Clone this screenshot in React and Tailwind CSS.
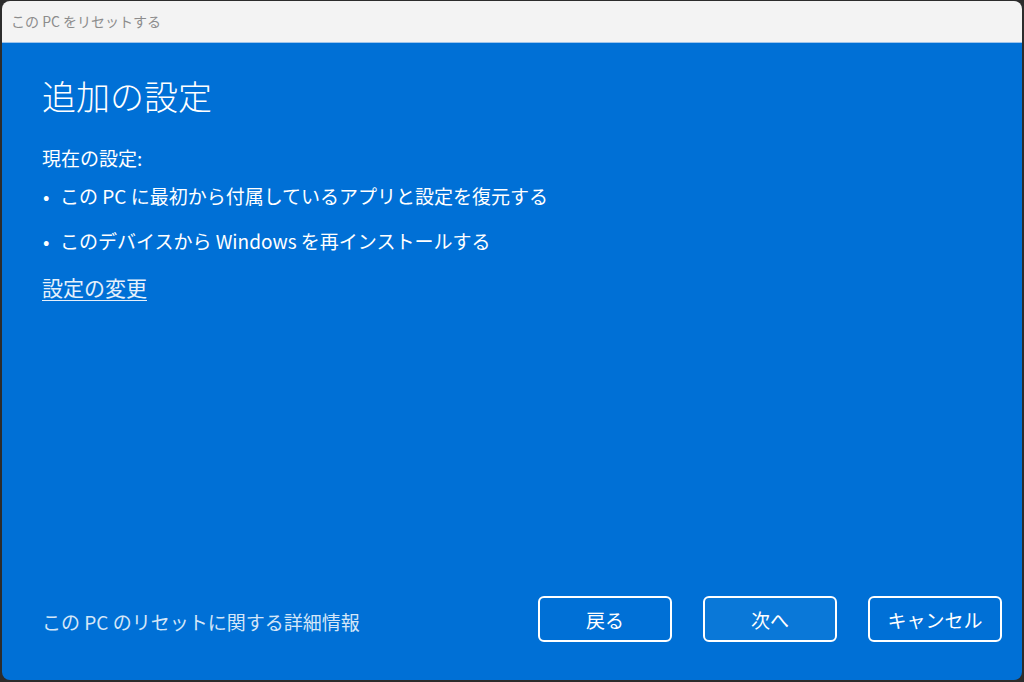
const FONT = { fontFamily: '"Segoe UI", "Noto Sans CJK JP", "Noto Sans", sans-serif' }

function DialogButton({ label, primary }) {
  return (
    <button
      className={`w-[134px] h-[46px] rounded-[6px] border-2 border-white text-[19px] text-white leading-none ${primary ? 'bg-[#0a78d8]' : 'bg-transparent'}`}
    >
      {label}
    </button>
  )
}

export default function App() {
  return (
    <div className="w-[1024px] h-[682px] bg-[#2c2c2c] pt-[1px] px-[2px] pb-[2px]" style={FONT}>
      <div className="h-full flex flex-col rounded-[8px] overflow-hidden">
        {/* タイトルバー */}
        <div className="h-[42px] shrink-0 bg-[#f3f3f3] border-b border-[#9ec4ec] flex items-center px-[9px]">
          <span className="text-[14px] text-[#8c8c8c]">この PC をリセットする</span>
        </div>

        {/* 本体 */}
        <div className="flex-1 flex flex-col bg-[#0070d6] text-white pl-[40px] pr-[20px] pt-[30px] pb-[38px]">
          <h1 className="text-[34px] font-light leading-[46px]">追加の設定</h1>

          <p className="mt-[25px] text-[19px] leading-[28px]">現在の設定:</p>
          <ul className="mt-[10px] text-[19px] leading-[28px]">
            <li className="flex items-center">
              <span className="w-[18px] pl-[1px]">•</span>
              <span>この PC に最初から付属しているアプリと設定を復元する</span>
            </li>
            <li className="flex items-center mt-[17px]">
              <span className="w-[18px] pl-[1px]">•</span>
              <span>このデバイスから Windows を再インストールする</span>
            </li>
          </ul>
          <a className="mt-[18px] self-start text-[21px] leading-[28px] underline underline-offset-[4px] decoration-1 text-[#e6f0fb]">
            設定の変更
          </a>

          <div className="flex-1" />

          <div className="flex items-center">
            <span className="mt-[7px] text-[19px] text-[#d4e6f8]">この PC のリセットに関する詳細情報</span>
            <div className="ml-auto flex gap-[31px]">
              <DialogButton label="戻る" />
              <DialogButton label="次へ" primary />
              <DialogButton label="キャンセル" />
            </div>
          </div>
        </div>
      </div>
    </div>
  )
}
